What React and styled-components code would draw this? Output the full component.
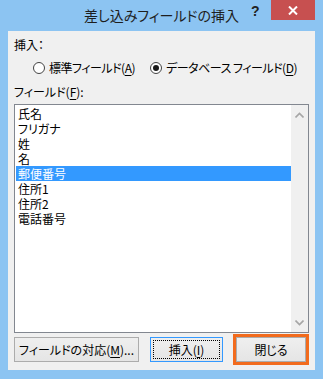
import styled, { createGlobalStyle } from 'styled-components';

const GlobalStyle = createGlobalStyle`
    html, body {
        margin: 0;
        padding: 0;
        background: #8cc4f2;
    }
    * {
        box-sizing: border-box;
    }
`;

const FONT = `"Noto Sans CJK JP", "Noto Sans", sans-serif`;

const Window = styled.div`
    width: 323px;
    height: 379px;
    background: #8cc4f2;
    display: flex;
    flex-direction: column;
    font-family: ${FONT};
    font-feature-settings: "palt";
    color: #000;
`;

const TitleBar = styled.div`
    height: 31px;
    position: relative;
`;

const Title = styled.div`
    position: absolute;
    left: 0;
    right: 0;
    top: 6px;
    text-align: center;
    font-size: 14px;
    line-height: 18px;
    color: #1e1e1e;
`;

const Help = styled.div`
    position: absolute;
    left: 251px;
    top: 3px;
    font-family: "Liberation Sans", sans-serif;
    font-weight: bold;
    font-size: 14px;
    color: #222;
`;

const CloseButton = styled.div`
    position: absolute;
    left: 271px;
    top: 0;
    width: 44px;
    height: 20px;
    background: #c75050;
    display: flex;
    align-items: center;
    justify-content: center;
`;

const Client = styled.div`
    flex: 1;
    margin: 0 8px 9px 8px;
    background: #f0f0f0;
    padding: 6px 6px 0 6px;
    display: flex;
    flex-direction: column;
    font-size: 12px;
`;

const Label = styled.div`
    height: 16px;
    line-height: 16px;
    white-space: nowrap;
    margin-top: ${(p) => p.$top || 0}px;
`;

const Key = styled.span`
    text-decoration: underline;
    text-underline-offset: 2px;
`;

const RadioRow = styled.div`
    display: flex;
    align-items: center;
    height: 16px;
    margin-top: 7px;
    padding-left: 19px;
`;

const RadioOption = styled.label`
    display: flex;
    align-items: center;
    gap: 4px;
    flex-shrink: 0;
    margin-right: ${(p) => p.$gap || 0}px;
    line-height: 16px;
`;

const RadioText = styled.span`
    white-space: pre;
    letter-spacing: -0.5px;
`;

const RadioCircle = styled.span`
    flex-shrink: 0;
    width: 12px;
    height: 12px;
    border-radius: 50%;
    border: 1px solid #444;
    background: #fff;
    display: flex;
    align-items: center;
    justify-content: center;
    &::after {
        content: '';
        width: 6px;
        height: 6px;
        border-radius: 50%;
        background: ${(p) => (p.$checked ? '#1a1a1a' : 'transparent')};
    }
`;

const ListBox = styled.div`
    margin-top: 4px;
    height: 229px;
    border: 1px solid #828790;
    background: #fff;
    display: flex;
`;

const Items = styled.div`
    flex: 1;
    padding: 1px 0 0 1px;
`;

const Item = styled.div`
    height: 15px;
    line-height: 15px;
    padding-left: 2px;
    white-space: nowrap;
    background: ${(p) => (p.$selected ? '#3399ff' : 'transparent')};
    color: ${(p) => (p.$selected ? '#fff' : '#000')};
`;

const ScrollBar = styled.div`
    width: 17px;
    background: #f0f0f0;
    display: flex;
    flex-direction: column;
    justify-content: space-between;
    align-items: center;
    padding: 7px 0 6px;
`;

const Buttons = styled.div`
    display: flex;
    align-items: center;
    margin-top: 4px;
    height: 25px;
`;

const Button = styled.div`
    flex-shrink: 0;
    width: ${(p) => p.$width}px;
    height: 25px;
    margin-left: ${(p) => p.$left || 0}px;
    border: 1px solid ${(p) => (p.$default ? '#3399ff' : '#acacac')};
    background: linear-gradient(#efefef, #e5e5e5);
    display: flex;
    align-items: center;
    justify-content: center;
    position: relative;
    line-height: 16px;
    white-space: nowrap;
`;

const FocusRect = styled.div`
    position: absolute;
    inset: 2px;
    border: 1px dotted #000;
`;

const Highlight = styled.div`
    margin-left: 10px;
    border: 3px solid #f26b1d;
    display: flex;
`;

const Chevron = ({ up }) => (
    <svg width="9" height="6" viewBox="0 0 9 6">
        <path
            d={up ? 'M0.5 5.5 L4.5 1.5 L8.5 5.5' : 'M0.5 0.5 L4.5 4.5 L8.5 0.5'}
            fill="none"
            stroke="#a6a6a6"
            strokeWidth="1.6"
        />
    </svg>
);

const fields = ['氏名', 'フリガナ', '姓', '名', '郵便番号', '住所1', '住所2', '電話番号'];

function App() {
    return (
        <>
            <GlobalStyle />
            <Window>
                <TitleBar>
                    <Title>差し込みフィールドの挿入</Title>
                    <Help>?</Help>
                    <CloseButton>
                        <svg width="10" height="9" viewBox="0 0 10 9">
                            <path d="M1 0.5 L9 8.5 M9 0.5 L1 8.5" stroke="#fff" strokeWidth="2" />
                        </svg>
                    </CloseButton>
                </TitleBar>
                <Client>
                    <Label>挿入：</Label>
                    <RadioRow>
                        <RadioOption $gap={15}>
                            <RadioCircle />
                            <RadioText>
                                標準フィールド(<Key>A</Key>)
                            </RadioText>
                        </RadioOption>
                        <RadioOption>
                            <RadioCircle $checked />
                            <RadioText>
                                データベース フィールド(<Key>D</Key>)
                            </RadioText>
                        </RadioOption>
                    </RadioRow>
                    <Label $top={8}>
                        フィールド(<Key>F</Key>):
                    </Label>
                    <ListBox>
                        <Items>
                            {fields.map((f) => (
                                <Item key={f} $selected={f === '郵便番号'}>
                                    {f}
                                </Item>
                            ))}
                        </Items>
                        <ScrollBar>
                            <Chevron up />
                            <Chevron />
                        </ScrollBar>
                    </ListBox>
                    <Buttons>
                        <Button $width={125}>
                            <span>
                                フィールドの対応(<Key>M</Key>)...
                            </span>
                        </Button>
                        <Button $width={73} $left={11} $default>
                            <FocusRect />
                            <span>
                                挿入(<Key>I</Key>)
                            </span>
                        </Button>
                        <Highlight>
                            <Button $width={70}>閉じる</Button>
                        </Highlight>
                    </Buttons>
                </Client>
            </Window>
        </>
    );
}

export default App;
